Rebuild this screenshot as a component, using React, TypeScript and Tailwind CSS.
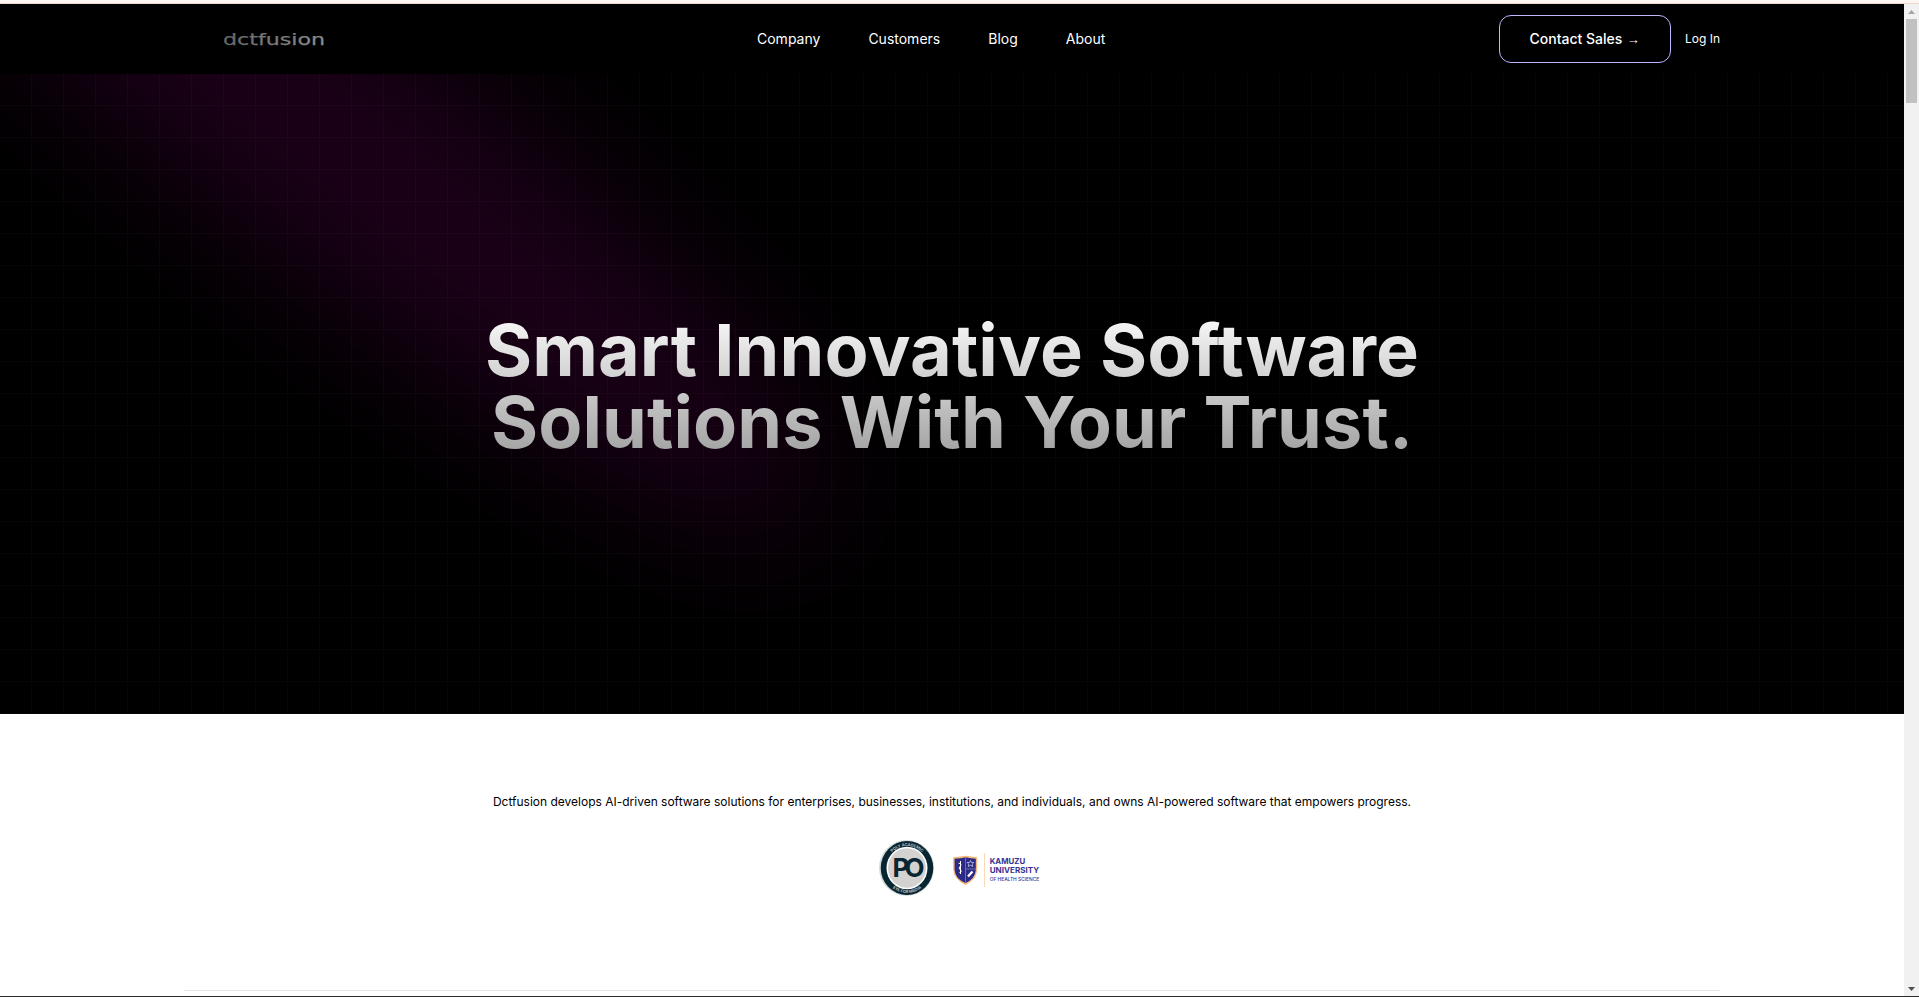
const navItems = ["Company", "Customers", "Blog", "About"];

function Wordmark() {
  return (
    <svg width="102" height="20" viewBox="0 0 102 20" className="block">
      <defs>
        <linearGradient id="wm" x1="0" x2="1">
          <stop offset="0" stopColor="#666" />
          <stop offset="1" stopColor="#8c8c8c" />
        </linearGradient>
      </defs>
      <text
        x="-1"
        y="16"
        fontFamily="'DejaVu Sans', sans-serif"
        fontSize="16"
        textLength="102"
        lengthAdjust="spacingAndGlyphs"
        fill="url(#wm)"
        stroke="url(#wm)"
        strokeWidth=".25"
      >
        dctfusion
      </text>
    </svg>
  );
}

function Header() {
  return (
    <header className="flex h-[70px] w-full shrink-0 items-center bg-black pl-[224px] pr-[184px] text-white">
      <div className="w-[533px]">
        <Wordmark />
      </div>
      <nav className="flex gap-12 text-[14px] leading-5">
        {navItems.map((item) => (
          <a key={item}>{item}</a>
        ))}
      </nav>
      <div className="flex flex-1 items-center justify-end gap-[14px]">
        <button className="flex h-12 w-[172px] items-baseline justify-center rounded-xl border border-[#c4b5fd] pt-[13px] text-[14px] leading-5 font-medium">
          Contact Sales
          <span className="ml-1 w-[14px] text-center font-['Liberation_Sans',sans-serif] text-[13px] font-normal">→</span>
        </button>
        <a className="text-[12px]">Log In</a>
      </div>
    </header>
  );
}

function Hero() {
  return (
    <section className="relative flex h-[640px] w-full shrink-0 items-center justify-center overflow-hidden bg-black pb-4">
      <svg className="absolute inset-0" width="1904" height="640">
        <defs>
          <pattern id="grid" width="32" height="32" y="-1" patternUnits="userSpaceOnUse">
            <path d="M0 .5H31.5V32" fill="none" stroke="#fff" strokeOpacity=".024" />
          </pattern>
          <filter
            id="soft"
            filterUnits="userSpaceOnUse"
            x="-800"
            y="-800"
            width="2600"
            height="2400"
            colorInterpolationFilters="sRGB"
          >
            <feGaussianBlur stdDeviation="70" />
          </filter>
        </defs>
        <g opacity=".106">
          <g filter="url(#soft)">
            <ellipse cx="340" cy="70" rx="610" ry="125" transform="rotate(38 340 70)" fill="#ff00e0" />
          </g>
        </g>
        <rect width="1904" height="640" fill="url(#grid)" />
      </svg>
      <h1 className="relative bg-linear-to-b from-neutral-50 to-neutral-400 bg-clip-text text-center text-[72px] leading-[72px] font-bold tracking-[0.1px] text-transparent">
        Smart Innovative Software
        <br />
        Solutions With Your Trust.
      </h1>
    </section>
  );
}

function PoLogo() {
  return (
    <svg width="56" height="58" viewBox="0 0 56 58">
      <defs>
        <path id="arcTop" d="M6.7 29A21.3 22 0 0 1 49.3 29" />
        <path id="arcBot" d="M4 29A24 25 0 0 0 52 29" />
      </defs>
      <ellipse cx="27.500" cy="29" rx="27.500" ry="28" fill="#d5dada" />
      <ellipse cx="28" cy="29" rx="26.300" ry="27" fill="#082532" />
      <ellipse cx="28" cy="29" rx="20.500" ry="21.300" fill="#fff" />
      <ellipse cx="28" cy="29" rx="19" ry="19.800" fill="#d3d2d1" />
      <g fontFamily="Inter, sans-serif" fontWeight="700" fontSize="4" fill="#b4c0c4" textAnchor="middle">
        <text>
          <textPath href="#arcTop" startOffset="50%">POLY ACADEMIC</textPath>
        </text>
        <text>
          <textPath href="#arcBot" startOffset="50%">EYE FOR MEDIA</textPath>
        </text>
      </g>
      <text x="13.500" y="38" fontFamily="Inter, sans-serif" fontWeight="700" fontSize="26" textLength="32" fill="#082532">
        PO
      </text>
    </svg>
  );
}

function KamuzuLogo() {
  return (
    <svg width="90" height="36" viewBox="0 0 90 36">
      <path d="M.9 5Q8 4.500 12.500 3.500Q18 4.500 23.500 5V17Q23 26 12.500 31Q1.500 26 .9 17Z" fill="#2b2a86" stroke="#f8b878" strokeWidth="1.400" />
      <path d="M12.500 5V30M12.500 16H23" stroke="#8c86b8" strokeWidth=".7" />
      <path d="M7.500 8V21M5.500 10Q9.500 11 7.500 13Q4.500 15 7.500 17Q9.500 18 6.500 20" fill="none" stroke="#fff" strokeWidth="1" />
      <path d="M17.500 7.500l1 2h2.300l-1.600 1.600.6 2.400-2.300-1.200-2.300 1.200.6-2.400-1.600-1.600H16.500z" fill="none" stroke="#dcd9f4" strokeWidth=".7" />
      <path d="M15 23.500L19.500 18.500" stroke="#fff" strokeWidth="2.200" />
      <path d="M31.500 0V34" stroke="#fbd9b5" strokeWidth="1" />
      <g fontFamily="Inter, sans-serif" fill="#35318f">
        <text x="36.700" y="10.500" fontSize="7.200" fontWeight="700" textLength="35.500" lengthAdjust="spacingAndGlyphs">KAMUZU</text>
        <text x="36.700" y="20.200" fontSize="7.200" fontWeight="700" textLength="49.500" lengthAdjust="spacingAndGlyphs">UNIVERSITY</text>
        <text x="36.700" y="27.500" fontSize="4.500" fontWeight="500" textLength="49.500" lengthAdjust="spacingAndGlyphs">OF HEALTH SCIENCE</text>
      </g>
    </svg>
  );
}

function Scrollbar() {
  return (
    <div className="flex w-[15px] shrink-0 flex-col items-center bg-[#f1f1f1]">
      <svg width="15" height="15" viewBox="0 0 15 15">
        <path d="M4 10L7.500 6L11 10Z" fill="#a3a3a3" />
      </svg>
      <div className="h-[84px] w-[11px] bg-[#c1c1c1]" />
      <div className="flex-1" />
      <svg width="15" height="15" viewBox="0 0 15 15">
        <path d="M4 6L7.500 10L11 6Z" fill="#505050" />
      </svg>
    </div>
  );
}

export default function App() {
  return (
    <div className="flex h-[997px] w-[1919px] flex-col overflow-hidden bg-white font-['Inter',sans-serif]">
      <div className="h-1 shrink-0 border-b border-[#f5d5cb] bg-[#fdf6f1]" />
      <div className="flex min-h-0 flex-1">
        <main className="flex w-[1904px] flex-col">
          <Header />
          <Hero />
          <section className="flex flex-1 flex-col items-center pt-20 text-black">
            <p className="text-[12px] leading-4 tracking-[-0.006px]">
              Dctfusion develops AI-driven software solutions for enterprises, businesses, institutions, and individuals, and owns AI-powered software that empowers progress.
            </p>
            <div className="mt-[29px] flex gap-[18px] pl-[18px]">
              <PoLogo />
              <div className="pt-[14px]">
                <KamuzuLogo />
              </div>
            </div>
            <div className="mt-auto mb-[5px] h-px w-[1536px] bg-[#e5e5e5]" />
          </section>
        </main>
        <Scrollbar />
      </div>
      <div className="h-px shrink-0 bg-[#2b2b2b]" />
    </div>
  );
}
